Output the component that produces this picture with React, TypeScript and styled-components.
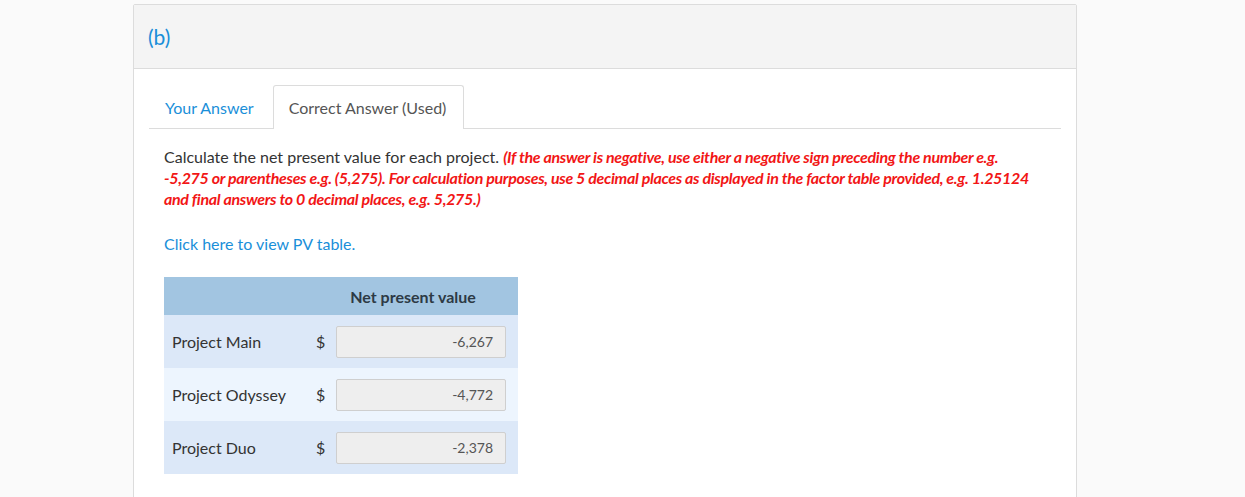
import React from 'react'
import styled, { createGlobalStyle } from 'styled-components'

const GlobalStyle = createGlobalStyle`
  html, body {
    margin: 0;
    padding: 0;
    background: #fafafa;
    font-family: Lato, 'Open Sans', sans-serif;
    color: #333;
  }
`

const Page = styled.div`
  padding: 4px 0 0 133px;
`

const Card = styled.section`
  width: 942px;
  min-height: 520px;
  background: #fff;
  border: 1px solid #dcdcdc;
  border-radius: 2px;
`

const CardHeader = styled.header`
  height: 64px;
  box-sizing: border-box;
  display: flex;
  align-items: center;
  padding: 0 14px 1px 14px;
  background: #f4f4f4;
  border-bottom: 1px solid #dcdcdc;
  font-size: 21px;
  color: #1a8fd9;
`

const CardBody = styled.div`
  padding: 16px 15px 0 15px;
`

const Tabs = styled.div`
  display: flex;
  align-items: flex-end;
  border-bottom: 1px solid #dcdcdc;
`

const Tab = styled.div<{ $active?: boolean }>`
  box-sizing: border-box;
  display: flex;
  align-items: center;
  padding: 0 ${(p) => (p.$active ? '17px' : '18px')} 0 15px;
  font-size: 16px;
  color: ${(p) => (p.$active ? '#555' : '#1a8fd9')};
  background: #fff;
  border: 1px solid ${(p) => (p.$active ? '#dcdcdc' : 'transparent')};
  border-bottom: none;
  border-radius: 3px 3px 0 0;
  margin-bottom: ${(p) => (p.$active ? '-1px' : '0')};
  height: ${(p) => (p.$active ? '44px' : '43px')};
`

const Content = styled.div`
  padding: 17px 15px 0 15px;
`

const Question = styled.p`
  margin: 0;
  max-width: 874px;
  font-size: 16px;
  line-height: 21px;
  color: #333;
`

const Note = styled.em`
  font-weight: 700;
  color: #f21616;
  letter-spacing: -0.32px;
`

const Link = styled.a`
  display: inline-block;
  margin-top: 25px;
  font-size: 16px;
  color: #1a8fd9;
  text-decoration: none;
`

const Table = styled.table`
  margin-top: 24px;
  width: 354px;
  border-collapse: collapse;
  font-size: 16px;
`

const HeadCell = styled.th`
  height: 38px;
  padding: 0;
  background: #a2c5e1;
  color: #2d3a45;
  font-weight: 700;
  text-align: center;
`

const Row = styled.tr<{ $alt?: boolean }>`
  height: 53px;
  background: ${(p) => (p.$alt ? '#edf5fe' : '#dce8f8')};
`

const Label = styled.td`
  padding: 0 0 0 8px;
  width: 138px;
  color: #333;
`

const Dollar = styled.td`
  width: 12px;
  padding: 0 8px 0 8px;
  color: #333;
  text-align: left;
`

const ValueCell = styled.td`
  padding: 0 12px 0 0;
`

const ValueBox = styled.div`
  width: 170px;
  height: 32px;
  box-sizing: border-box;
  display: flex;
  align-items: center;
  justify-content: flex-end;
  padding: 0 12px;
  background: #eeeeee;
  border: 1px solid #cfcfcf;
  border-radius: 2px;
  font-size: 14px;
  color: #555;
`

const rows = [
  { name: 'Project Main', value: '-6,267' },
  { name: 'Project Odyssey', value: '-4,772' },
  { name: 'Project Duo', value: '-2,378' },
]

export default function App() {
  return (
    <Page>
      <GlobalStyle />
      <Card>
        <CardHeader>(b)</CardHeader>
        <CardBody>
          <Tabs>
            <Tab>Your Answer</Tab>
            <Tab $active>Correct Answer (Used)</Tab>
          </Tabs>
          <Content>
            <Question>
              Calculate the net present value for each project.{' '}
              <Note>
                (If the answer is negative, use either a negative sign preceding the number e.g.
                -5,275 or parentheses e.g. (5,275). For calculation purposes, use 5 decimal places
                as displayed in the factor table provided, e.g. 1.25124 and final answers to 0
                decimal places, e.g. 5,275.)
              </Note>
            </Question>
            <Link href='#'>Click here to view PV table.</Link>
            <Table>
              <thead>
                <tr>
                  <HeadCell />
                  <HeadCell colSpan={2}>Net present value</HeadCell>
                </tr>
              </thead>
              <tbody>
                {rows.map((r, i) => (
                  <Row key={r.name} $alt={i === 1}>
                    <Label>{r.name}</Label>
                    <Dollar>$</Dollar>
                    <ValueCell>
                      <ValueBox>{r.value}</ValueBox>
                    </ValueCell>
                  </Row>
                ))}
              </tbody>
            </Table>
          </Content>
        </CardBody>
      </Card>
    </Page>
  )
}
